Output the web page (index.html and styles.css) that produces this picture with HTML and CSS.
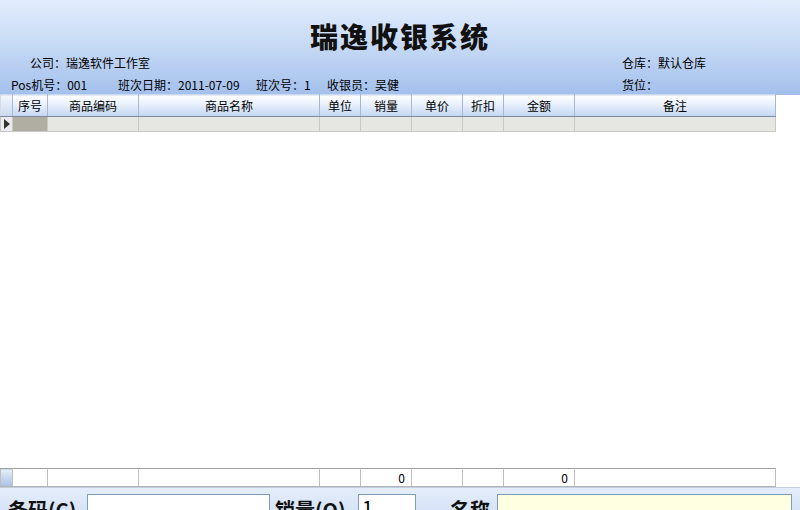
FILE: index.html
```html
<!DOCTYPE html>
<html lang="zh-CN">
<head>
    <meta charset="UTF-8">
    <title>瑞逸收银系统</title>
    <link rel="stylesheet" href="styles.css">
</head>
<body>
    <div class="window">
        <div class="top">
            <h1 class="title">瑞逸收银系统</h1>
            <div class="info">
                <div class="info-left first">公司：瑞逸软件工作室</div>
                <div class="info-right">仓库：默认仓库</div>
                <div class="info-left second">
                    <span class="w-pos">Pos机号：001</span>
                    <span class="w-date">班次日期：2011-07-09</span>
                    <span class="w-shift">班次号：1</span>
                    <span>收银员：吴健</span>
                </div>
                <div class="info-right">货位：</div>
            </div>
        </div>

        <div class="grid-area">
            <table class="grid">
                <colgroup>
                    <col style="width:12px">
                    <col style="width:35px">
                    <col style="width:91px">
                    <col style="width:181px">
                    <col style="width:41px">
                    <col style="width:51px">
                    <col style="width:51px">
                    <col style="width:41px">
                    <col style="width:71px">
                    <col style="width:201px">
                </colgroup>
                <thead>
                    <tr>
                        <th></th>
                        <th>序号</th>
                        <th>商品编码</th>
                        <th>商品名称</th>
                        <th>单位</th>
                        <th>销量</th>
                        <th>单价</th>
                        <th>折扣</th>
                        <th>金额</th>
                        <th>备注</th>
                    </tr>
                </thead>
                <tbody>
                    <tr>
                        <td class="indicator"><span class="arrow"></span></td>
                        <td class="selected"></td>
                        <td></td>
                        <td></td>
                        <td></td>
                        <td></td>
                        <td></td>
                        <td></td>
                        <td></td>
                        <td></td>
                    </tr>
                </tbody>
            </table>
        </div>

        <table class="grid totals">
            <colgroup>
                <col style="width:12px">
                <col style="width:35px">
                <col style="width:91px">
                <col style="width:181px">
                <col style="width:41px">
                <col style="width:51px">
                <col style="width:51px">
                <col style="width:41px">
                <col style="width:71px">
                <col style="width:201px">
            </colgroup>
            <tr>
                <td class="indicator"></td>
                <td></td>
                <td></td>
                <td></td>
                <td></td>
                <td class="num">0</td>
                <td></td>
                <td></td>
                <td class="num">0</td>
                <td></td>
            </tr>
        </table>

        <div class="entry">
            <label class="entry-label">条码(C)</label>
            <input class="field code" type="text">
            <label class="entry-label qty-label">销量(Q)</label>
            <input class="field qty" type="text" value="1">
            <label class="entry-label name-label">名称</label>
            <input class="field name" type="text">
        </div>
    </div>
</body>
</html>
```

FILE: styles.css
```css
* {
    margin: 0;
    padding: 0;
    box-sizing: border-box;
}

body {
    font-family: "Noto Sans CJK SC", "Noto Sans", sans-serif;
    font-size: 12px;
    color: #000;
    background: #fff;
    width: 800px;
    height: 510px;
    overflow: hidden;
}

.window {
    display: flex;
    flex-direction: column;
    height: 530px;
}

/* header */
.top {
    height: 94px;
    background: linear-gradient(to bottom, #e2edfc 0%, #c6d9f5 50%, #a3c0ec 100%);
    padding-top: 20px;
}

.title {
    text-align: center;
    font-size: 28px;
    font-weight: 900;
    line-height: 32px;
    letter-spacing: 2px;
    color: #111;
}

.info {
    display: grid;
    grid-template-columns: 622px 1fr;
    grid-auto-rows: 22px;
    line-height: 22px;
    margin-top: 0;
}

.info-left.first {
    padding-left: 30px;
}

.info-left.second {
    padding-left: 11px;
    display: flex;
}

.w-pos {
    width: 107px;
}

.w-date {
    width: 138px;
}

.w-shift {
    width: 71px;
}

/* grid */
.grid-area {
    height: 374px;
    background: #fff;
    position: relative;
}

.grid-area::before {
    content: "";
    position: absolute;
    left: 775px;
    right: 0;
    top: 0;
    height: 1px;
    background: #a3c0ec;
}

.grid {
    border-collapse: collapse;
    table-layout: fixed;
    width: 775px;
}

.grid th {
    height: 22px;
    font-weight: normal;
    text-align: center;
    background: linear-gradient(to bottom, #ffffff 0%, #eaf1fc 40%, #c2d6f3 100%);
    border-left: 1px solid #d4dce8;
    border-right: 1px solid #a9b8cc;
    border-bottom: 1px solid #808a99;
    border-top: 1px solid #cdd9ea;
}

.grid th:first-child {
    background: linear-gradient(to bottom, #f4f7fc 0%, #c9d9f1 100%);
}

.grid td {
    height: 15px;
    background: #e6e6e2;
    border: 1px solid #c8c8c4;
    border-top: none;
}

.grid td.indicator {
    background: #e9ebef;
    position: relative;
}

.grid td.selected {
    background: #b0aea2;
}

.arrow {
    position: absolute;
    left: 3px;
    top: 2px;
    width: 0;
    height: 0;
    border-top: 5px solid transparent;
    border-bottom: 5px solid transparent;
    border-left: 6px solid #333;
}

/* totals row */
.totals td {
    height: 18px;
    background: #fff;
    border: 1px solid #c0c0c0;
    border-top: 1px solid #a0a0a0;
    border-bottom: 1px solid #b4b4b4;
    text-align: right;
    padding-right: 6px;
    line-height: 15px;
}

.totals td.indicator {
    background: linear-gradient(to bottom, #e8eef8 0%, #a9c1e6 100%);
}

/* entry panel */
.entry {
    flex: 1;
    display: flex;
    align-items: flex-start;
    padding-top: 6px;
    background: linear-gradient(to bottom, #e4edfb 0%, #cbdcf4 100%);
    border-top: 1px solid #c2cedd;
}

.entry-label {
    font-size: 20px;
    font-weight: bold;
    line-height: 26px;
    margin-top: 3px;
    color: #111;
}

.entry-label:first-child {
    padding-left: 8px;
    width: 87px;
}

.field {
    height: 26px;
    border: 1px solid #7f9db9;
    background: #fff;
    font-family: "Noto Sans CJK SC", "Noto Sans", sans-serif;
    font-size: 20px;
    padding-left: 3px;
    line-height: 24px;
}

.code {
    width: 183px;
}

.qty-label {
    margin-left: 5px;
    width: 83px;
}

.qty {
    width: 58px;
}

.name-label {
    width: 81px;
    text-align: right;
    padding-right: 7px;
}

.name {
    width: 295px;
    background: #ffffe1;
}
```
